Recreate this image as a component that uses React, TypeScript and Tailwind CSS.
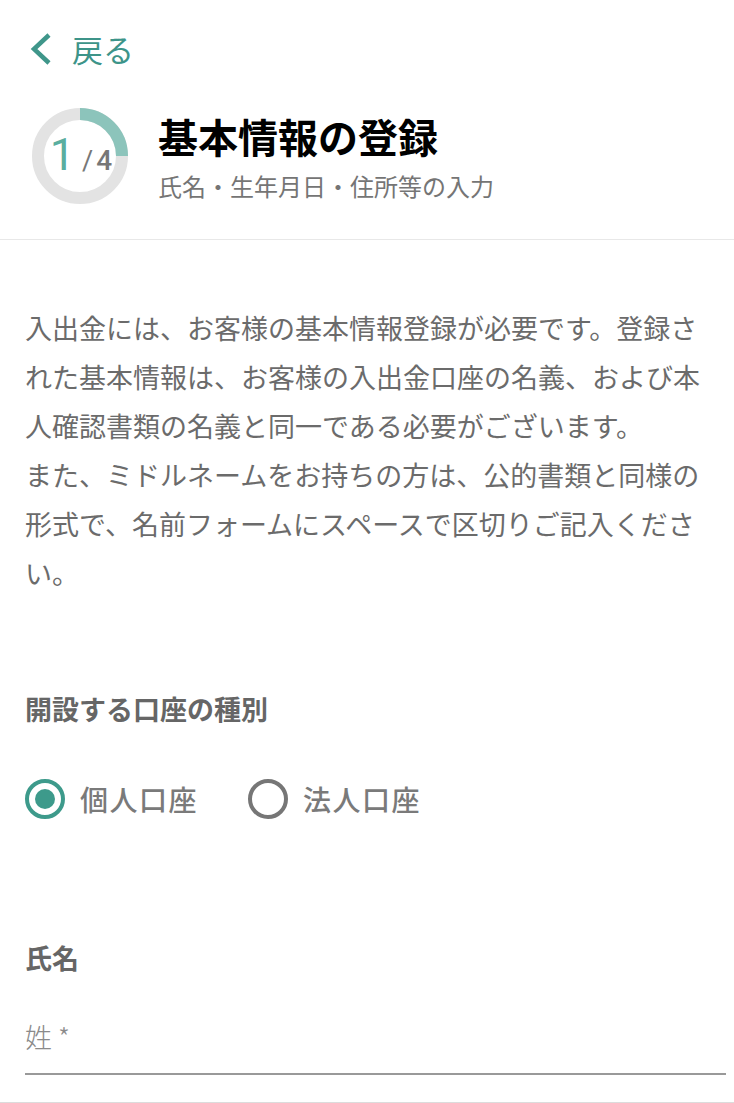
import { useState } from 'react';

function ProgressRing() {
  return (
    <div className="relative h-[96px] w-[96px] shrink-0">
      <svg width="96" height="96" viewBox="0 0 96 96" className="absolute inset-0">
        <circle cx="48" cy="48" r="42" fill="none" stroke="#e3e3e3" strokeWidth="12" />
        <path d="M48 6 A42 42 0 0 1 90 48" fill="none" stroke="#8cc4bb" strokeWidth="12" />
      </svg>
      <div className="absolute inset-0 flex items-baseline justify-center pt-[23px] pl-[2px] font-['Roboto',sans-serif]">
        <span className="text-[45px] font-normal leading-[48px] text-[#5aae9f]">1</span>
        <span className="ml-[7px] text-[27px] leading-[48px] text-[#777777]">/</span>
        <span className="ml-[3px] text-[28px] font-medium leading-[48px] text-[#777777]">4</span>
      </div>
    </div>
  );
}

function Radio({ checked, label, onClick }: { checked: boolean; label: string; onClick: () => void }) {
  return (
    <button onClick={onClick} className="flex items-center">
      <span
        className={
          checked
            ? 'flex h-[40px] w-[40px] items-center justify-center rounded-full border-[4.5px] border-[#3d9a8b]'
            : 'flex h-[40px] w-[40px] items-center justify-center rounded-full border-[4px] border-[#767676]'
        }
      >
        {checked && <span className="h-[20px] w-[20px] rounded-full bg-[#3d9a8b]" />}
      </span>
      <span className="ml-[15px] text-[28px] font-medium leading-[40px] tracking-[1.5px] text-[#7a7a7a]">
        {label}
      </span>
    </button>
  );
}

export default function App() {
  const [kind, setKind] = useState<'personal' | 'corporate'>('personal');

  return (
    <div className="min-h-screen bg-white font-['Noto_Sans_CJK_JP',sans-serif]">
      <header className="border-b border-[#e8e8e8] pb-[35px]">
        <div className="flex h-[98px] items-center pl-[30px]">
          <svg width="22" height="32" viewBox="0 0 22 32" fill="none">
            <path d="M19 2 L4 16 L19 30" stroke="#3f968a" strokeWidth="4.5" />
          </svg>
          <span className="ml-[20px] text-[31px] leading-[40px] text-[#3d9489]">戻る</span>
        </div>
        <div className="flex items-start pl-[32px] pt-[10px]">
          <ProgressRing />
          <div className="ml-[30px] mt-[4px] flex flex-col">
            <h1 className="text-[40px] font-bold leading-[48px] text-black">基本情報の登録</h1>
            <p className="mt-[10px] text-[24px] leading-[32px] text-[#757575]">
              氏名・生年月日・住所等の入力
            </p>
          </div>
        </div>
      </header>

      <main className="pl-[25px] pr-[8px] pt-[63px]">
        <p className="pr-[17px] text-[27px] leading-[49px] text-[#6b6b6b]">
          入出金には、お客様の基本情報登録が必要です。登録された基本情報は、お客様の入出金口座の名義、および本人確認書類の名義と同一である必要がございます。
          <br />
          また、ミドルネームをお持ちの方は、公的書類と同様の形式で、名前フォームにスペースで区切りご記入ください。
        </p>

        <h2 className="mt-[92px] text-[27px] font-bold leading-[40px] text-[#666666]">開設する口座の種別</h2>
        <div className="mt-[50px] flex items-center gap-[50px]">
          <Radio checked={kind === 'personal'} label="個人口座" onClick={() => setKind('personal')} />
          <Radio checked={kind === 'corporate'} label="法人口座" onClick={() => setKind('corporate')} />
        </div>

        <h2 className="mt-[119px] text-[27px] font-bold leading-[40px] text-[#666666]">氏名</h2>
        <div className="mt-[32px] h-[65px] border-b-2 border-[#999999]">
          <span className="text-[27px] font-light leading-[54px] text-[#8a8a8a]">姓 *</span>
        </div>
      </main>
      <div className="mt-[27px] border-t border-[#dcdcdc]" />
    </div>
  );
}
